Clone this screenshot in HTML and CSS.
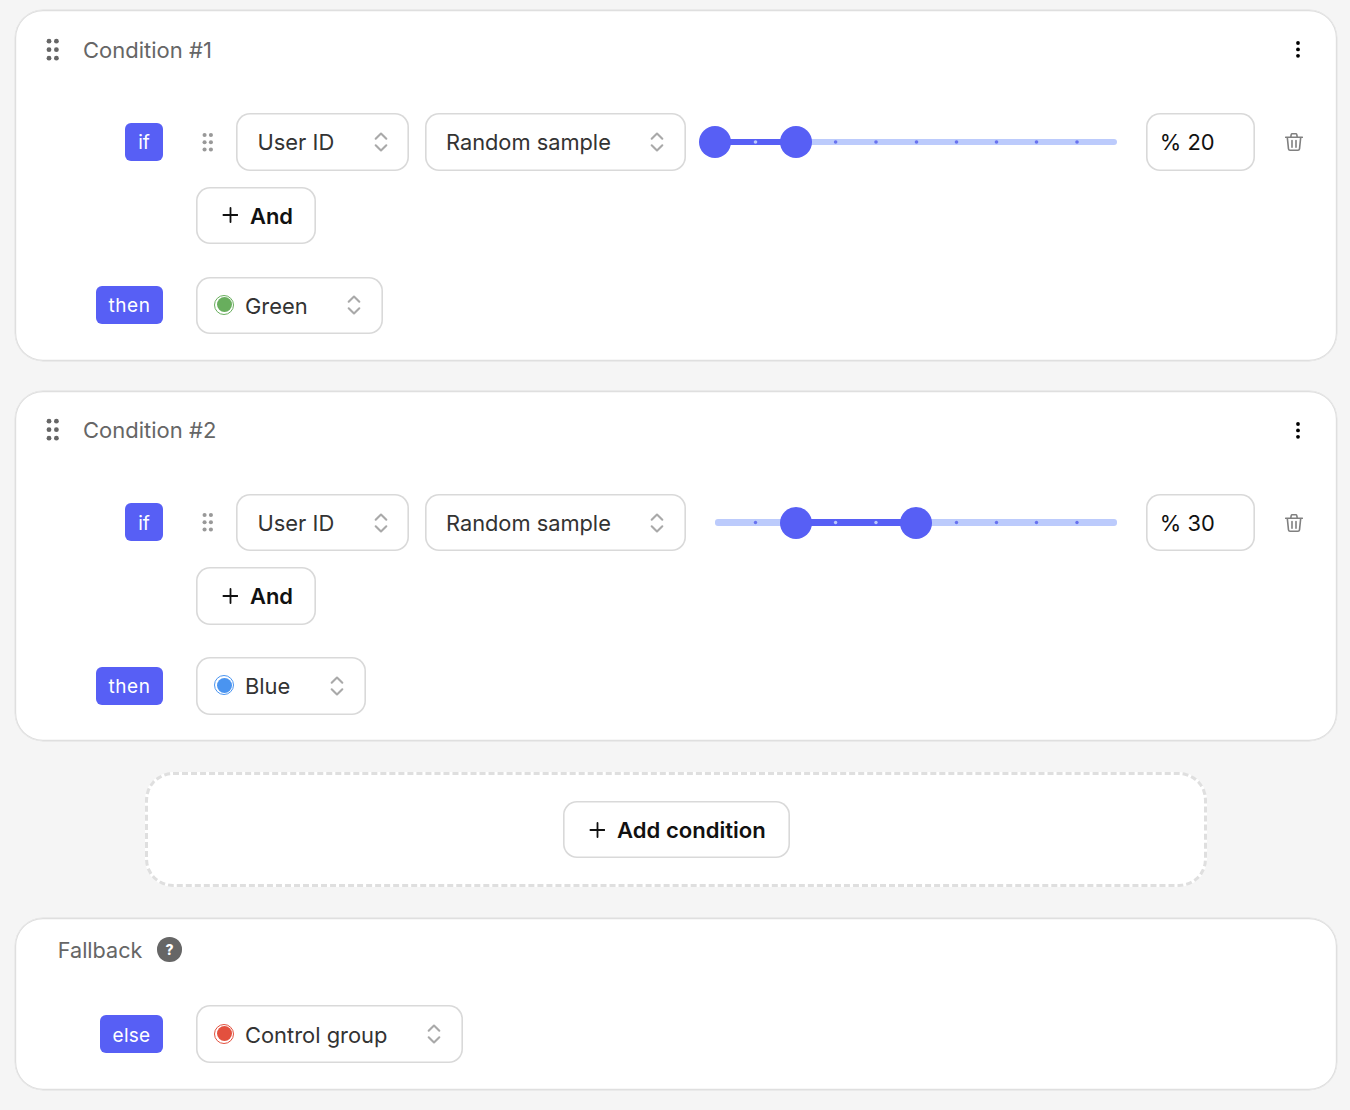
FILE: index.html
```html
<!DOCTYPE html>
<html lang="en">
<head>
<meta charset="utf-8">
<title>Targeting conditions</title>
<link rel="stylesheet" href="styles.css">
</head>
<body>
<svg class="defs" width="0" height="0" aria-hidden="true">
  <symbol id="grip" viewBox="0 0 14 24"><circle cx="3" cy="3.2" r="2.4"/><circle cx="10.4" cy="3.2" r="2.4"/><circle cx="3" cy="11.7" r="2.4"/><circle cx="10.4" cy="11.7" r="2.4"/><circle cx="3" cy="20.2" r="2.4"/><circle cx="10.4" cy="20.2" r="2.4"/></symbol>
  <symbol id="updown" viewBox="0 0 14 20"><path d="M1.7 6.7 7 1.5l5.300 5.200M1.700 13.300 7 18.500l5.300-5.200" fill="none" stroke="#a9a9a9" stroke-width="2.100" stroke-linecap="round" stroke-linejoin="round"/></symbol>
  <symbol id="plus" viewBox="0 0 16 16"><path d="M8.500 .9v14.200M1.400 8h14.200" fill="none" stroke="#111" stroke-width="1.800" stroke-linecap="round"/></symbol>
  <symbol id="trash" viewBox="0 0 18 18"><path d="M.7 4.300h16.600M5.700 4.300l.5-2.700q.2-.8 1-.8h3.600q.8 0 1 .8l.5 2.700M2.300 4.300l1.200 11.500q.2 1.400 1.500 1.400h8q1.300 0 1.500-1.400l1.200-11.500M7 7.500v6.700M11 7.500v6.700" fill="none" stroke="#808080" stroke-width="1.600" stroke-linecap="round" stroke-linejoin="round"/></symbol>
  <symbol id="more" viewBox="0 0 4 17"><circle cx="2" cy="2" r="1.900"/><circle cx="2" cy="8.400" r="1.900"/><circle cx="2" cy="14.800" r="1.900"/></symbol>
</svg>
<main class="page">
  <section class="card">
    <header class="card-head">
      <svg class="grip"><use href="#grip"/></svg><h2 class="title">Condition #1</h2>
      <svg class="more"><use href="#more"/></svg>
    </header>
    <div class="row">
      <div class="label"><span class="tag">if</span></div>
      <svg class="grip-small"><use href="#grip"/></svg>
      <div class="select property"><span>User ID</span><svg class="updown"><use href="#updown"/></svg></div>
      <div class="select operator"><span>Random sample</span><svg class="updown"><use href="#updown"/></svg></div>
      <svg class="slider" viewBox="0 0 434 32">
        <rect class="rail" x="16" y="13" width="402" height="6" rx="3"/>
        <rect class="range" x="16" y="13" width="81" height="6"/>
        <g class="tick"><circle cx="136.600" cy="16" r="1.800"/><circle cx="177" cy="16" r="1.800"/><circle cx="217.500" cy="16" r="1.800"/><circle cx="257.500" cy="16" r="1.800"/><circle cx="297.500" cy="16" r="1.800"/><circle cx="337.500" cy="16" r="1.800"/><circle cx="378" cy="16" r="1.800"/></g>
        <circle class="tick-on" cx="56.500" cy="16" r="1.800"/>
        <circle class="thumb" cx="16" cy="16" r="16"/><circle class="thumb" cx="97" cy="16" r="16"/>
      </svg>
      <div class="percent">% 20</div>
      <svg class="trash"><use href="#trash"/></svg>
    </div>
    <div class="row add-row"><div class="label"></div><button class="button and"><svg class="plus"><use href="#plus"/></svg><span>And</span></button></div>
    <div class="row result-row"><div class="label"><span class="tag then">then</span></div><div class="select green"><i class="dot"></i><span>Green</span><svg class="updown"><use href="#updown"/></svg></div></div>
  </section>

  <section class="card">
    <header class="card-head">
      <svg class="grip"><use href="#grip"/></svg><h2 class="title">Condition #2</h2>
      <svg class="more"><use href="#more"/></svg>
    </header>
    <div class="row">
      <div class="label"><span class="tag">if</span></div>
      <svg class="grip-small"><use href="#grip"/></svg>
      <div class="select property"><span>User ID</span><svg class="updown"><use href="#updown"/></svg></div>
      <div class="select operator"><span>Random sample</span><svg class="updown"><use href="#updown"/></svg></div>
      <svg class="slider" viewBox="0 0 434 32">
        <rect class="rail" x="16" y="12" width="402" height="7" rx="3"/>
        <rect class="range" x="97" y="12" width="120" height="7"/>
        <g class="tick"><circle cx="56.500" cy="15.500" r="1.700"/><circle cx="257.500" cy="15.500" r="1.700"/><circle cx="297.500" cy="15.500" r="1.700"/><circle cx="337.500" cy="15.500" r="1.700"/><circle cx="378" cy="15.500" r="1.700"/></g>
        <g class="tick-on"><circle cx="136.600" cy="15.500" r="1.700"/><circle cx="177" cy="15.500" r="1.700"/></g>
        <circle class="thumb" cx="97" cy="16" r="16"/><circle class="thumb" cx="217" cy="16" r="16"/>
      </svg>
      <div class="percent">% 30</div>
      <svg class="trash"><use href="#trash"/></svg>
    </div>
    <div class="row add-row"><div class="label"></div><button class="button and"><svg class="plus"><use href="#plus"/></svg><span>And</span></button></div>
    <div class="row result-row"><div class="label"><span class="tag then">then</span></div><div class="select blue"><i class="dot"></i><span>Blue</span><svg class="updown"><use href="#updown"/></svg></div></div>
  </section>

  <section class="add-zone"><button class="button add-condition"><svg class="plus"><use href="#plus"/></svg><span>Add condition</span></button></section>

  <section class="card fallback">
    <header class="card-head"><h2 class="title">Fallback</h2><span class="help">?</span></header>
    <div class="row"><div class="label"><span class="tag else">else</span></div><div class="select red"><i class="dot"></i><span>Control group</span><svg class="updown"><use href="#updown"/></svg></div></div>
  </section>
</main>
</body>
</html>
```
FILE: styles.css
```css
* { box-sizing: border-box; }
body { margin: 0; background: #f5f5f5; font-family: Inter, "Liberation Sans", sans-serif; font-size: 21.9px; color: #333; }
.defs { display: block; height: 0; }
svg { flex: none; }
.page { display: flex; flex-direction: column; height: 1110px; padding: 10px 13px 0 15px; }
.card { flex: none; height: 350.800px; margin-bottom: 29.750px; border-radius: 28px; background: #fff; box-shadow: 0 0 0 .4px #dfdfdf, inset 0 0 0 1.200px #dfdfdf; }
.card-head { display: flex; align-items: center; height: 79px; padding: 0 37.500px 0 31px; }
.grip { width: 14px; height: 24px; fill: #666; }
.title { margin: .7px 0 0 23px; font-size: 22px; line-height: 30px; font-weight: 400; color: #666; white-space: nowrap; }
.more { width: 4px; height: 17px; margin-left: auto; fill: #000; }
.row { display: flex; align-items: center; height: 58px; margin-top: 24px; }
.add-row { margin-top: 15.300px; }
.result-row { margin-top: 32px; }
.label { display: flex; justify-content: flex-end; width: 148px; margin-right: 32.5px; flex: none; }
.tag { display: flex; align-items: center; justify-content: center; width: 38px; height: 38px; margin-top: -.3px; padding-top: 1.500px; border-radius: 6px; background: #575ff5; color: #fff; font-size: 19px; }
.tag.then { width: 67px; letter-spacing: .5px; }
.tag.else { width: 63px; padding-top: 2.500px; letter-spacing: .3px; }
.select, .percent, .button { display: flex; align-items: center; height: 57.500px; border: 0; border-radius: 14px; background: #fff; box-shadow: inset 0 0 0 1.600px #d9d9d9; white-space: nowrap; flex: none; }
.select { padding: 0 21.800px 0 21.500px; justify-content: space-between; }
.grip-small { width: 12px; height: 21px; margin: 0 22px 0 6.500px; fill: #999; }
.updown { width: 14px; height: 20px; }
.property { width: 173.400px; margin-right: 15.600px; }
.operator { width: 261.300px; margin-right: 12.700px; padding-left: 21px; }
.operator span { font-size: 21.8px; }
.slider { width: 434px; height: 32px; margin-right: 13px; overflow: visible; }
.rail { fill: #bccbfc; }
.range, .thumb { fill: #575ff5; }
.tick { fill: #6872f0; }
.tick-on { fill: #bccbfc; }
.percent { width: 109px; padding-left: 13.800px; color: #111; }
.trash { width: 18px; height: 18px; margin-left: 29.800px; }
.button { font: 600 22.1px Inter, "Liberation Sans", sans-serif; color: #111; padding: 0 0 0 26.500px; gap: 12px; }
.button span { padding-top: .8px; }
.plus { width: 16px; height: 16px; }
.and { width: 120.800px; font-size: 21.9px; }
.green, .blue, .red { padding-left: 18.500px; justify-content: flex-start; }
.green .updown, .blue .updown, .red .updown { margin-left: auto; }
.dot { width: 20px; height: 20px; margin: -.8px 11px 0 0; padding: 1.500px; border: 1px solid; border-radius: 50%; background: #fff; flex: none; }
.dot::before { content: ""; display: block; width: 100%; height: 100%; border-radius: 50%; background: currentColor; }
.green { width: 187px; }
.blue { width: 170px; }
.red { width: 267px; }
.green span { padding-top: 1px; }
.red span { padding-top: 1.500px; }
.green .dot { color: #68ae5d; }
.blue .dot { color: #4a94f0; }
.red .dot { color: #e3503e; }
.add-zone { display: flex; flex: none; align-items: center; justify-content: center; width: 1062px; height: 115px; margin: 1px 0 30.900px 130px; border: 3px dashed #dfdfdf; border-radius: 28px; background: #fff; }
.add-condition { width: 227px; }
.fallback { height: 172px; margin-bottom: 0; }
.fallback .card-head { height: 64px; padding-left: 42.800px; }
.fallback .title { margin-left: 0; font-size: 21.6px; }
.help { display: flex; align-items: center; justify-content: center; width: 24.500px; height: 24.500px; margin: -.5px 0 0 15px; border-radius: 50%; background: #666; color: #fff; font-size: 14px; font-weight: 800; }
.fallback .row { margin-top: 23px; }
```
